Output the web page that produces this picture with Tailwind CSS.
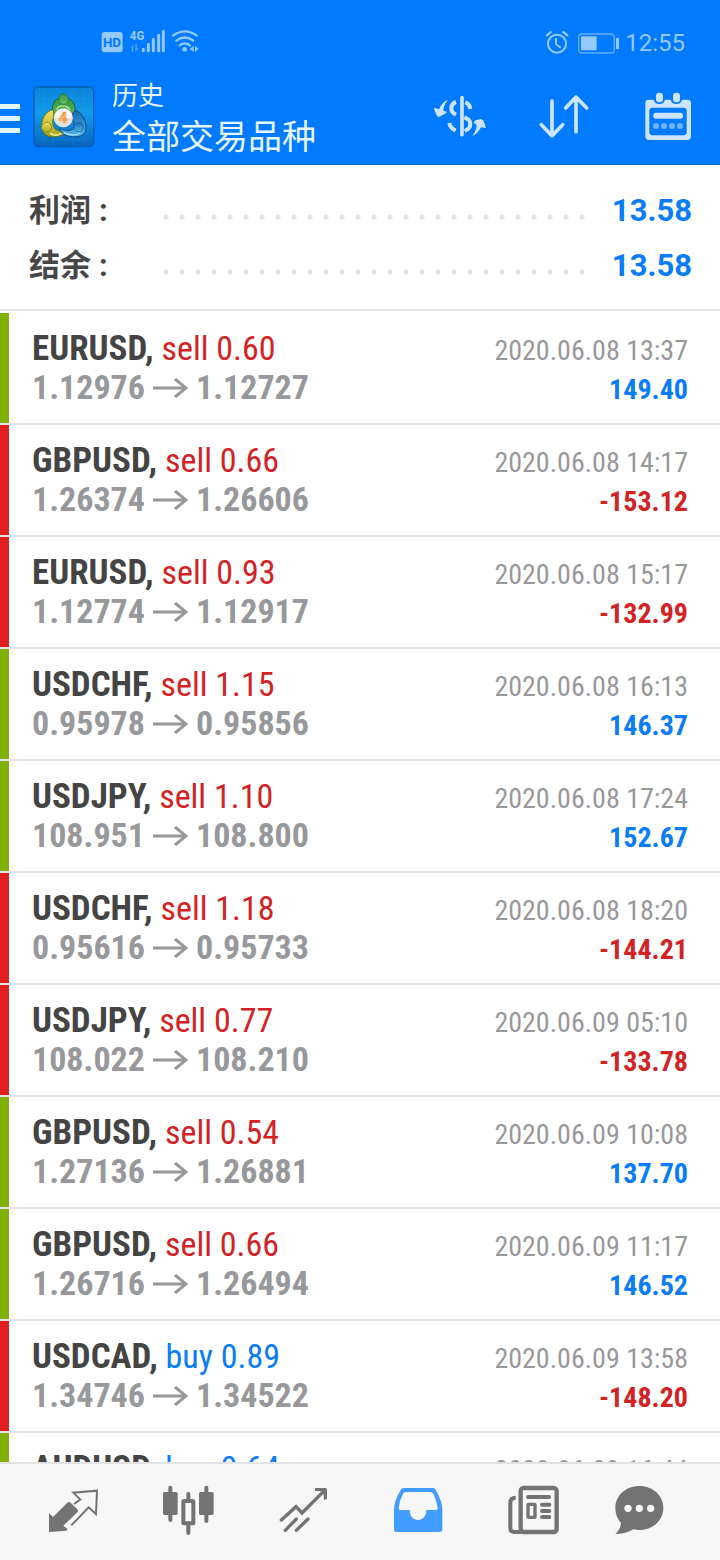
<!DOCTYPE html>
<html lang="zh-CN">
<head>
<meta charset="utf-8">
<meta name="viewport" content="width=device-width, initial-scale=1">
<title>历史</title>
<script src="https://cdn.jsdelivr.net/npm/@tailwindcss/browser@4"></script>
</head>
<body class="flex h-screen flex-col overflow-hidden bg-white font-['Roboto','Noto_Sans_CJK_SC',sans-serif]">

<header class="shrink-0 border-b border-[#0869cf] bg-[#007aff]">
  <!-- status bar -->
  <div class="flex h-[69px] items-center justify-between pt-4 pr-[35px] pl-[90px] text-[#94c8ff]">
    <svg class="h-[45px] w-[120px]" viewBox="0 0 360 135" fill="none" aria-hidden="true">
      <rect x="35" y="36" width="63" height="61" rx="9" fill="currentColor"/>
      <text x="66" y="81" text-anchor="middle" font-family="Roboto" font-weight="700" font-size="40" fill="#007aff">HD</text>
      <text x="119" y="60" font-family="Roboto Condensed, Liberation Sans Narrow, Roboto" font-weight="700" font-size="40" fill="currentColor">4G</text>
      <g fill="#4ba2ff"><path d="M121 84l9-10v22h-5V84zM136 73v22l11-11h-6V73z"/></g>
      <g stroke="currentColor" stroke-width="9" stroke-linecap="round"><path d="M160 88v4M175 73v19M190 58v34M206 46v46M220 34v58"/></g>
      <g stroke="currentColor" stroke-width="7" stroke-linecap="round"><path d="M249 47q36-26 71 0M259 62q26-19 51 0M269 76q16-12 31 0"/></g>
      <circle cx="284" cy="88" r="7" fill="currentColor"/>
      <path d="M299 87l12-10v19zM315 77l11 10-11 9z" fill="currentColor"/>
    </svg>
    <div class="flex items-center gap-1">
      <svg class="h-[30px] w-[76px]" viewBox="45 20 228 90" fill="none" stroke="currentColor" aria-hidden="true">
        <circle cx="81" cy="67" r="27" stroke-width="6"/>
        <path d="M78 50v19l14 10" stroke-width="6"/>
        <path d="M51 42l11-10M100 32l12 10" stroke-width="7" stroke-linecap="round"/>
        <rect x="146" y="38" width="107" height="57" rx="10" stroke="#62aeff" stroke-width="4"/>
        <rect x="153" y="45" width="47" height="42" rx="3" fill="currentColor" stroke="none"/>
        <rect x="258" y="49" width="9" height="35" rx="3" fill="currentColor" stroke="none"/>
      </svg>
      <span class="text-2xl leading-8">12:55</span>
    </div>
  </div>

  <!-- title bar -->
  <div class="flex h-[95px] items-center pr-6">
    <button type="button" aria-label="菜单" class="flex w-[20px] flex-col gap-[7px] pt-1">
      <span class="h-[5px] bg-[#e0f4ff]"></span>
      <span class="h-[5px] bg-[#e0f4ff]"></span>
      <span class="h-[5px] bg-[#e0f4ff]"></span>
    </button>
    <svg class="ml-[10px] size-[70px] shrink-0" viewBox="0 0 210 210" fill="none" aria-hidden="true">
      <defs>
        <linearGradient id="tile" x1="0" y1="0" x2="0" y2="1"><stop offset="0" stop-color="#0b84dc"/><stop offset=".45" stop-color="#109be8"/><stop offset="1" stop-color="#0763bd"/></linearGradient>
        <linearGradient id="green" x1="0" y1="0" x2="0" y2="1"><stop offset="0" stop-color="#2f9443"/><stop offset="1" stop-color="#72c064"/></linearGradient>
        <linearGradient id="yellow" x1="0" y1="0" x2="0" y2="1"><stop offset="0" stop-color="#eee05e"/><stop offset="1" stop-color="#a9a51e"/></linearGradient>
        <linearGradient id="blue" x1="0" y1="0" x2="0" y2="1"><stop offset="0" stop-color="#1566ad"/><stop offset="1" stop-color="#53b5ec"/></linearGradient>
      </defs>
      <rect x="12" y="15" width="179" height="179" rx="13" fill="url(#tile)" stroke="#075bb0" stroke-width="4"/>
      <path d="M40 18v173M70 18v173M130 18v173M160 18v173M15 50h173M15 85h173M15 150h173M15 174h173" stroke="#42b4f1" stroke-opacity=".25" stroke-width="1.500"/>
      <path d="M67 94C67 55 76 49 100 48s35 13 36 39c0 14-4 23-9 27l-15-25c-8-9-17-9-25-3L73 108z" fill="url(#green)" stroke="#145c35" stroke-width="3"/>
      <path d="M80 83c6-15 31-15 39 0" stroke="#bce8a5" stroke-width="4"/>
      <path d="M70 83c-22 4-34 23-35 47-1 26 20 38 42 34 17-3 26-7 28-12l-24-7c-13-7-17-27-9-39z" fill="url(#yellow)" stroke="#64701f" stroke-width="3"/>
      <path d="M60 153c9 8 23 8 34 2" stroke="#f7ef9c" stroke-width="4"/>
      <path d="M136 84c23 9 35 35 31 61-3 17-22 20-40 19-20-1-33-10-39-25 20 10 43 10 45-7 1-13-6-23-11-29z" fill="url(#blue)" stroke="#124e87" stroke-width="3"/>
      <path d="M101 152c16 9 37 9 50 1" stroke="#a5dcf7" stroke-width="4"/>
      <ellipse cx="101" cy="51" rx="14" ry="16" fill="url(#green)" stroke="#1d703a" stroke-width="2"/>
      <circle cx="50" cy="136" r="15" fill="url(#yellow)" stroke="#737a22" stroke-width="2"/>
      <circle cx="146" cy="135" r="14" fill="url(#blue)" stroke="#165f9f" stroke-width="2"/>
      <circle cx="100" cy="107" r="28" fill="#f7f5f2"/>
      <path d="M72 108a28 28 0 0 0 56 0z" fill="#e4e0dc"/>
      <text x="99" y="123" text-anchor="middle" font-family="Roboto" font-weight="500" font-size="46" fill="#ffc47b" stroke="#ee8f36" stroke-width="2">4</text>
    </svg>
    <div class="ml-[12px] flex-1 pt-1 text-[#e6f5ff]">
      <h1 class="text-[26px] leading-9">历史</h1>
      <p class="text-[34px] leading-[46px] whitespace-nowrap">全部交易品种</p>
    </div>
    <div class="flex gap-12 text-[#cce4ff]">
      <button type="button" aria-label="货币">
        <svg class="size-14" viewBox="36 27 168 168" fill="none" aria-hidden="true">
          <path d="M126 53v111" stroke="currentColor" stroke-width="11" stroke-linecap="round"/>
          <path d="M108 66q-14 5-14 20 0 11 14 18M136 67q13 5 15 20M88 129q2 15 19 22M133 112q18 6 18 20 0 14-17 21" stroke="currentColor" stroke-width="12"/>
          <path d="M84 60Q67 64 58 87L41 84 51 109 57 111 79 99 80 95 70 92Q70 76 84 60zM157 168Q172 163 183 142L198 144 191 122 183 117 166 121 161 128 170 134Q170 151 157 168z" fill="currentColor"/>
        </svg>
      </button>
      <button type="button" aria-label="排序">
        <svg class="size-14" viewBox="348 27 168 168" fill="none" stroke="currentColor" stroke-width="11" stroke-linecap="round" stroke-linejoin="round" aria-hidden="true">
          <path d="M396 63v104M364 134l32 33 32-33M468 155V51M437 84l31-33 32 33"/>
        </svg>
      </button>
      <button type="button" aria-label="日期">
        <svg class="size-14" viewBox="660 27 168 168" fill="none" aria-hidden="true">
          <path fill-rule="evenodd" fill="currentColor" d="M686 59h15c2 8 8 13 17 13s15-5 17-13h17c2 8 8 13 17 13s15-5 17-13h17q10 0 10 10v100q0 11-11 11H687q-11 0-11-11V69q0-10 10-10zM697 83q-9 0-9 9v65q0 9 9 9h94q9 0 9-9V92q0-9-9-9z"/>
          <rect x="708" y="38" width="21" height="29" rx="10" fill="currentColor"/>
          <rect x="759" y="38" width="21" height="29" rx="10" fill="currentColor"/>
          <rect x="700" y="98" width="89" height="18" rx="8" fill="currentColor"/>
          <g fill="#70b4ff"><circle cx="708" cy="138" r="9"/><circle cx="732" cy="138" r="9"/><circle cx="756" cy="138" r="9"/><circle cx="780" cy="138" r="9"/></g>
        </svg>
      </button>
    </div>
  </div>
</header>

<main class="flex min-h-0 flex-1 flex-col overflow-hidden">
  <dl class="shrink-0 border-b-2 border-[#e4e4e4] pt-[18px] pr-7 pb-4 pl-[29px] text-[31px] leading-[55px] font-bold">
    <div class="flex">
      <dt class="w-[129px] text-[#474747]">利润<span class="ml-2">:</span></dt>
      <div class="mr-[22px] flex-1 bg-[radial-gradient(circle,#e2e2e2_2px,transparent_3px)] bg-size-[16px_16px] bg-position-[0_26px] bg-repeat-x"></div>
      <dd class="text-[#0a7cf5]">13.58</dd>
    </div>
    <div class="flex">
      <dt class="w-[129px] text-[#474747]">结余<span class="ml-2">:</span></dt>
      <div class="mr-[22px] flex-1 bg-[radial-gradient(circle,#e2e2e2_2px,transparent_3px)] bg-size-[16px_16px] bg-position-[0_26px] bg-repeat-x"></div>
      <dd class="text-[#0a7cf5]">13.58</dd>
    </div>
  </dl>
  <ul id="deals" class="min-h-0 flex-1 overflow-hidden pt-[2px] font-['Roboto_Condensed','Liberation_Sans_Narrow','Roboto',sans-serif]"></ul>
</main>

<nav class="grid shrink-0 grid-cols-6 border-t-2 border-[#e2e2e2] bg-[#f7f7f7] px-4 text-[#737373]">
  <a href="#quotes" aria-label="行情" class="flex h-24 items-center justify-center">
    <svg class="size-15" viewBox="130 186 180 180" fill="none" aria-hidden="true">
      <path d="M148 279L160 291 203 248q5-4 10 0l20 20q4 4 0 9L191 317l13 10-4 5-52 4z" fill="currentColor"/>
      <path d="M223 252l19-13-21-21 71-6-3 70-22-20-52 54" stroke="currentColor" stroke-width="6"/>
    </svg>
  </a>
  <a href="#chart" aria-label="图表" class="flex h-24 items-center justify-center">
    <svg class="size-15" viewBox="474 186 180 180" fill="none" aria-hidden="true">
      <path d="M511 203v97M619 203v100M565 222v16M565 316v23" stroke="currentColor" stroke-width="12" stroke-linecap="round"/>
      <rect x="489" y="216" width="44" height="69" rx="5" fill="currentColor"/>
      <rect x="597" y="216" width="44" height="69" rx="5" fill="currentColor"/>
      <rect x="550" y="243" width="30" height="67" rx="2" stroke="currentColor" stroke-width="12"/>
    </svg>
  </a>
  <a href="#trade" aria-label="交易" class="flex h-24 items-center justify-center">
    <svg class="size-15" viewBox="818 186 180 180" fill="none" stroke="currentColor" stroke-width="10" stroke-linecap="round" aria-hidden="true">
      <path d="M843 300l44-40 18 19 68-68M855 331l33-34M888 331l35-34"/>
      <path d="M944 204h31q5 0 5 5v28l-9 3-2-26-25-1z" fill="currentColor" stroke="none"/>
    </svg>
  </a>
  <a href="#history" aria-label="历史" aria-current="page" class="flex h-24 items-center justify-center text-[#419cff]">
    <svg class="size-15" viewBox="82 186 180 180" aria-hidden="true">
      <path fill="currentColor" fill-rule="evenodd" d="M132 204h87q6 0 9 6 20 33 20 60v57q0 9-9 9H112q-9 0-9-9v-57q0-27 20-60 3-6 9-6zM138 216q-5 0-8 5-11 20-13 44 0 5 5 5h28c0 20 11 30 25 30s25-10 25-30h29q6 0 5-6-3-25-13-43-3-5-9-5z"/>
    </svg>
  </a>
  <a href="#news" aria-label="新闻" class="flex h-24 items-center justify-center">
    <svg class="size-15" viewBox="426 186 180 180" fill="none" stroke="currentColor" aria-hidden="true">
      <rect x="482" y="204" width="108" height="132" rx="9" stroke-width="13"/>
      <path d="M467 233q-16 0-16 15v77q0 11 12 11h25" stroke-width="12"/>
      <path d="M504 231h63M546 254h22M546 273h22M546 291h22" stroke-width="12" stroke-linecap="round"/>
      <rect x="504" y="253" width="21" height="39" rx="1" stroke-width="10"/>
    </svg>
  </a>
  <a href="#messages" aria-label="消息" class="flex h-24 items-center justify-center">
    <svg class="size-15" viewBox="770 186 180 180" overflow="visible" aria-hidden="true">
      <path fill="currentColor" d="M837 198c41 0 72 29 72 66s-31 66-72 66q-10 0-18-2-21 14-54 14 15-13 17-33-17-18-17-45c0-37 31-66 72-66z"/>
      <g fill="#f7f7f7"><circle cx="803" cy="265" r="11"/><circle cx="837" cy="265" r="11"/><circle cx="871" cy="265" r="11"/></g>
    </svg>
  </a>
</nav>

<script>
const deals = [
  ["EURUSD", "sell", "0.60", "1.12976", "1.12727", "2020.06.08 13:37", "149.40"],
  ["GBPUSD", "sell", "0.66", "1.26374", "1.26606", "2020.06.08 14:17", "-153.12"],
  ["EURUSD", "sell", "0.93", "1.12774", "1.12917", "2020.06.08 15:17", "-132.99"],
  ["USDCHF", "sell", "1.15", "0.95978", "0.95856", "2020.06.08 16:13", "146.37"],
  ["USDJPY", "sell", "1.10", "108.951", "108.800", "2020.06.08 17:24", "152.67"],
  ["USDCHF", "sell", "1.18", "0.95616", "0.95733", "2020.06.08 18:20", "-144.21"],
  ["USDJPY", "sell", "0.77", "108.022", "108.210", "2020.06.09 05:10", "-133.78"],
  ["GBPUSD", "sell", "0.54", "1.27136", "1.26881", "2020.06.09 10:08", "137.70"],
  ["GBPUSD", "sell", "0.66", "1.26716", "1.26494", "2020.06.09 11:17", "146.52"],
  ["USDCAD", "buy", "0.89", "1.34746", "1.34522", "2020.06.09 13:58", "-148.20"],
  ["AUDUSD", "buy", "0.64", "0.70142", "0.69918", "2020.06.09 16:44", "143.36"]
];
document.getElementById("deals").innerHTML = deals.map(([symbol, side, lots, open, close, time, profit]) => {
  const loss = profit.startsWith("-");
  return `
  <li class="flex border-b-2 border-[#e4e4e4]">
    <span class="w-[9px] shrink-0 ${loss ? "bg-[#e11f20]" : "bg-[#80b000]"}"></span>
    <div class="flex-1 py-4 pr-8 pl-[23px] whitespace-nowrap">
      <div class="flex h-[39px] items-baseline justify-between">
        <p class="text-[34px] leading-[39px]"><b class="text-[35px] text-[#444444]">${symbol},</b> <span class="${side === "sell" ? "text-[#d32224]" : "text-[#0a7cf5]"}">${side} ${lots}</span></p>
        <time class="text-[28px] leading-[39px] text-[#97989b]">${time}</time>
      </div>
      <div class="flex h-[39px] items-baseline justify-between font-bold">
        <p class="flex items-center text-[34px] leading-[39px] text-[#97989b]">${open}<svg class="mx-2 h-5 w-[35px]" viewBox="0 0 35 20" fill="none" stroke="currentColor" stroke-width="3" role="img" aria-label="至"><path d="M0 10h33M22 1l11 9-11 9"/></svg>${close}</p>
        <span class="text-[28px] leading-[39px] ${loss ? "text-[#d32224]" : "text-[#0a7cf5]"}">${profit}</span>
      </div>
    </div>
  </li>`;
}).join("");
</script>
</body>
</html>
